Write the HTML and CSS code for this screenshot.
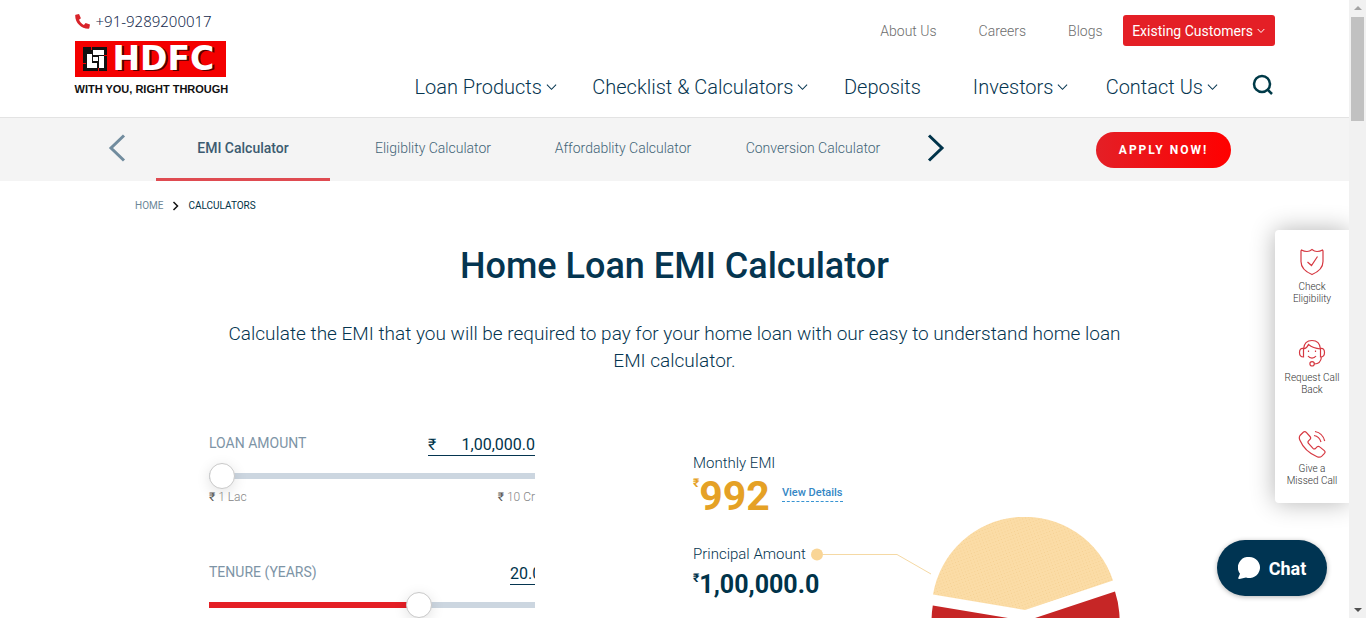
FILE: index.html
```html
<!DOCTYPE html>
<html lang="en">
<head>
<meta charset="utf-8">
<meta name="viewport" content="width=device-width, initial-scale=1">
<title>Home Loan EMI Calculator</title>
<link rel="stylesheet" href="styles.css">
</head>
<body>
<div class="page">
  <header class="header">
    <div class="container header-inner">
      <div class="brand">
        <a class="phone" href="#call">
          <svg class="phone-icon" viewBox="0 0 16 16" aria-hidden="true"><path d="M.7.8 4.3 0l2 4.5-2 1.700c.9 2.300 2.800 4.300 5.200 5.400l1.800-2.100L16 11.300 15.300 15c-.1.5-.4.8-1 .8C6.500 15.800.2 9.500.2 1.700.2 1.200.4.9.7.800Z"/></svg>
          +91-9289200017
        </a>
        <a class="logo" href="#home" aria-label="HDFC">
          <span class="logo-box">
            <svg class="logo-mark" viewBox="0 0 24 24" aria-hidden="true"><path fill="#111" d="M0 0h24v24H0z"/><path fill="#fff" d="M10 3h11v5H10zM4 7h5v14H4zM4 16h10v5H4zM16 9h5v12h-5zM10 10h5v4h-5z"/><path fill="#f40000" d="M8 0h1v3H8zM0 16h3v1H0zM21 8h3v1h-3zM15 21h1v3h-1z"/></svg>
            <span class="logo-name">HDFC</span>
          </span>
          <span class="logo-tag">WITH YOU, RIGHT THROUGH</span>
        </a>
      </div>
      <div class="menus">
        <nav class="top-links" aria-label="Company">
          <a href="#about">About Us</a>
          <a href="#careers">Careers</a>
          <a href="#blogs">Blogs</a>
          <button class="customers" type="button">Existing Customers
            <svg class="chev-small" viewBox="0 0 8 6" aria-hidden="true"><path d="m.7 1 3.300 3.500L7.300 1"/></svg>
          </button>
        </nav>
        <nav class="main-nav" aria-label="Main">
          <a href="#loans">Loan Products <svg class="chev" viewBox="0 0 12 8" aria-hidden="true"><path d="m1 1.500 5 5 5-5"/></svg></a>
          <a href="#checklist">Checklist &amp; Calculators <svg class="chev" viewBox="0 0 12 8" aria-hidden="true"><path d="m1 1.500 5 5 5-5"/></svg></a>
          <a href="#deposits">Deposits</a>
          <a href="#investors">Investors <svg class="chev" viewBox="0 0 12 8" aria-hidden="true"><path d="m1 1.500 5 5 5-5"/></svg></a>
          <a href="#contact">Contact Us <svg class="chev" viewBox="0 0 12 8" aria-hidden="true"><path d="m1 1.500 5 5 5-5"/></svg></a>
          <button class="search" type="button" aria-label="Search"><svg viewBox="0 0 22 22" aria-hidden="true"><circle cx="10" cy="10" r="8"/><path d="m15.500 15.500 4.500 4.500"/></svg></button>
        </nav>
      </div>
    </div>
  </header>

  <div class="subnav">
    <button class="arrow prev" type="button" aria-label="Previous"><svg viewBox="0 0 18 28" aria-hidden="true"><path d="M16 1.500 3 14l13 12.500"/></svg></button>
    <nav class="tabs" aria-label="Calculators">
      <a class="tab active" href="#emi">EMI Calculator</a>
      <a class="tab" href="#eligibility">Eligiblity Calculator</a>
      <a class="tab" href="#affordability">Affordablity Calculator</a>
      <a class="tab" href="#conversion">Conversion Calculator</a>
    </nav>
    <button class="arrow next" type="button" aria-label="Next"><svg viewBox="0 0 18 28" aria-hidden="true"><path d="m2 1.500 13 12.500L2 26.500"/></svg></button>
    <a class="apply" href="#apply">APPLY NOW!</a>
  </div>

  <main>
    <nav class="crumbs" aria-label="Breadcrumb">
      <a href="#home">HOME</a>
      <svg viewBox="0 0 7 10" aria-hidden="true"><path d="m1.500 1 4 4-4 4"/></svg>
      <span>CALCULATORS</span>
    </nav>
    <h1>Home Loan EMI Calculator</h1>
    <p class="intro">Calculate the EMI that you will be required to pay for your home loan with our easy to understand home loan<br>EMI calculator.</p>

    <div class="calculator">
      <form class="inputs">
        <div class="field">
          <div class="field-head">
            <label for="amount">LOAN AMOUNT</label>
            <span class="value-box amount-box"><span>₹</span><input id="amount" type="text" value="1,00,000.0"></span>
          </div>
          <input class="range range-amount" type="range" min="0" max="100" value="0" aria-label="Loan amount slider">
          <div class="limits"><span><b>₹</b> 1 Lac</span><span><b>₹</b> 10 Cr</span></div>
        </div>
        <div class="field">
          <div class="field-head">
            <label for="tenure">TENURE (YEARS)</label>
            <span class="value-box tenure-box"><input id="tenure" type="text" value="20.0"></span>
          </div>
          <input class="range range-tenure" type="range" min="1" max="30" value="20" aria-label="Tenure slider">
        </div>
      </form>

      <section class="results" aria-label="Results">
        <div class="monthly">
          <div class="result-label">Monthly EMI</div>
          <div class="emi-row"><span class="emi"><sup>₹</sup>992</span><a class="details" href="#details">View Details</a></div>
        </div>
        <div class="breakup">
          <div class="principal">
            <div class="result-label">Principal Amount</div>
            <div class="sum"><sup>₹</sup>1,00,000.0</div>
          </div>
          <svg class="pie" viewBox="811 517 310 198" aria-hidden="true">
            <defs><pattern id="dots" width="3" height="3" patternUnits="userSpaceOnUse" patternTransform="rotate(-20)"><path fill="#fbdca6" d="M0 0h3v3H0z"/><path fill="#f5d092" d="M0 0h1v1H0z"/></pattern></defs>
            <circle cx="817" cy="554.500" r="6" fill="#f9d596"/>
            <path d="M823 554.500h74l34 19.500" fill="none" stroke="#f5d9a4"/>
            <path fill="url(#dots)" d="M1025 610 933 594.500A93 93 0 0 1 1113 580.500Z"/>
            <path fill="#c62626" d="M1026 621 932.800 605.500A94 94 0 1 0 1115 591.500Z"/>
          </svg>
        </div>
      </section>
    </div>
  </main>

  <aside class="quick" aria-label="Quick actions">
    <a href="#check"><svg viewBox="0 0 28 28" aria-hidden="true"><path d="M14 1.500c-1.500 1.300-3.200 2-5 2-2 0-4-.6-5.500-1.500L3 3v10.500c0 6 5 10.500 11 13 6-2.500 11-7 11-13V3l-.5-1C23 2.900 21 3.500 19 3.500c-1.800 0-3.500-.7-5-2ZM9.500 14l4 3.500 6-9"/></svg>Check<br>Eligibility</a>
    <a href="#callback"><svg viewBox="0 0 28 28" aria-hidden="true"><path d="M5.500 10C6 4.500 9.500 1.500 14 1.500s8 3 8.500 8.500M5.500 9.500c-2.500-.5-4 1-4 4s1.500 4.500 4 4.500Zm17 0c2.500-.5 4 1 4 4s-1.500 4.500-4 4.500Zm-17 .5c2.500-.5 4-2 5-4.500 3 2.500 7 4 12 4.500M23.500 18c-.5 4-3 7-7 7m-.2-.2a2.200 2.200 0 1 1-4.400 0 2.200 2.200 0 0 1 4.400 0ZM10 17c2 2.700 6 2.700 8 0M10.500 11.500v1.500M17.500 11.500v1.500"/></svg>Request Call<br>Back</a>
    <a href="#missed"><svg viewBox="0 0 28 28" aria-hidden="true"><path d="M2 5.500 5.500 2c1-.7 2-.5 2.800.3L12 6.500c.8.9.8 2 0 2.800l-1.500 1.500c-.8.8-.6 1.800 0 2.700l4.500 4.800c.8.800 1.800.800 2.600 0l1.400-1.400c.8-.7 1.900-.7 2.700 0l4.600 3.700c.9.800 1 1.800.2 2.700l-2.700 2.800c-1.300 1.200-3 1.300-4.700.6C11.500 23.600 5 17.500 1.800 10c-.7-1.700-.6-3.300.2-4.500ZM16 5.500c3.500.6 6 3 7 6.500M17 1.500c5 1 8.500 4.500 9.700 9.500"/></svg>Give a<br>Missed Call</a>
  </aside>

  <button class="chat" type="button"><svg viewBox="0 0 22 22" aria-hidden="true"><path d="M11.500 0A10.500 10.500 0 1 1 8 20.400L1.500 22 0 21.500l2-4.800A10.500 10.500 0 0 1 11.500 0Z"/></svg>Chat</button>
</div>
<div class="scrollbar" aria-hidden="true"><i class="up"></i><i class="grip"></i><i class="down"></i></div>
</body>
</html>
```
FILE: styles.css
```css
* { box-sizing: border-box; }
body {
  margin: 0;
  display: grid;
  grid-template-columns: minmax(0, 1fr) 17px;
  height: 100vh;
  overflow: hidden;
  background: #fff;
  color: #053550;
  font-family: Roboto, "Open Sans", sans-serif;
}
a { color: inherit; text-decoration: none; }
button { font: inherit; border: 0; padding: 0; background: none; cursor: pointer; }
svg { display: block; flex: none; }
.page { position: relative; overflow: hidden; }

/* Header */
.header { border-bottom: 1px solid #e3e3e3; }
.container { max-width: 1200px; margin: 0 auto; }
.header-inner { display: flex; justify-content: space-between; height: 117px; }
.brand { padding-top: 11px; }
.phone { display: flex; align-items: center; gap: 6px; height: 20px; font-family: "Noto Sans", sans-serif; font-size: 15px; font-weight: 300; color: #12284c; }
.phone-icon { width: 15px; height: 15px; fill: #d8232a; }
.logo { display: block; margin-top: 10px; width: 151px; }
.logo-box { display: flex; align-items: center; gap: 6px; height: 36px; padding-left: 8px; background: #f40000; color: #fff; }
.logo-mark { width: 24px; height: 24px; }
.logo-name { font-family: "DejaVu Sans", sans-serif; font-size: 33px; font-weight: 700; line-height: 36px; text-shadow: 2px 1px 0 #500; }
.logo-tag { display: block; margin-top: 6px; font-family: "Liberation Sans", sans-serif; font-size: 11px; font-weight: 700; line-height: 12px; color: #111; white-space: nowrap; }
.menus { width: 860px; }
.top-links { display: flex; justify-content: flex-end; align-items: center; padding-top: 15px; height: 46px; font-size: 14px; font-weight: 300; color: #6d6d6d; }
.top-links a { margin-right: 42px; }
.top-links a:nth-of-type(3) { margin-right: 20px; }
.customers { display: flex; align-items: center; justify-content: center; gap: 4px; width: 152px; height: 31px; border-radius: 3px; background: #e41f26; color: #fff; font-weight: 400; font-size: 14px; }
.chev-small { width: 8px; height: 6px; fill: none; stroke: #fff; }
.main-nav { display: grid; grid-template-columns: 178fr 252fr 129fr 133fr 147fr 21fr; align-items: center; padding-top: 25px; font-size: 20px; font-weight: 300; line-height: 32px; }
.main-nav a { display: flex; align-items: center; gap: 4px; white-space: nowrap; }
.chev { width: 11px; height: 8px; fill: none; stroke: #053550; stroke-width: 1.1; }
.search svg { width: 22px; height: 22px; margin-bottom: 4px; fill: none; stroke: #003a48; stroke-width: 2.5; }

/* Calculator tabs */
.subnav { display: flex; align-items: center; height: 63px; padding: 0 118px 0 108px; background: #f4f4f4; }
.arrow svg { width: 18px; height: 28px; margin-bottom: 4px; fill: none; stroke-width: 3; }
.prev { margin-right: 30px; }
.prev svg { stroke: #718c9e; }
.next svg { stroke: #00334a; }
.tabs { display: grid; grid-template-columns: 174px 206px 174px 206px; align-self: stretch; margin-right: 11px; }
.tab { display: flex; align-items: center; justify-content: center; border-bottom: 3px solid transparent; font-size: 14px; font-weight: 300; color: #426477; }
.tab.active { font-weight: 500; color: #3c5b70; border-color: #df4b51; }
.apply { margin-left: auto; width: 135px; height: 36px; border-radius: 18px; background: linear-gradient(90deg, #e41f26, #f00); color: #fff; font-size: 12px; font-weight: 700; letter-spacing: 2px; line-height: 36px; text-align: center; }

/* Intro */
.crumbs { display: flex; align-items: center; gap: 9px; padding: 18px 0 0 135px; font-size: 10px; line-height: 14px; color: #003245; }
.crumbs a { color: #6d8798; }
.crumbs svg { width: 7px; height: 10px; fill: none; stroke: #111; stroke-width: 1.5; }
h1 { margin: 27px 0 0; font-size: 36px; font-weight: 500; line-height: 52px; text-align: center; }
.intro { margin: 28px 0 0; font-size: 19px; font-weight: 300; line-height: 27px; text-align: center; }

/* Calculator */
.calculator { display: grid; grid-template-columns: 326px 1fr; gap: 158px; padding: 59px 209px 0; }
.field { height: 129px; }
.field-head { display: flex; justify-content: space-between; height: 24px; }
.field-head label { font-size: 14px; line-height: 20px; color: #7d94a6; }
.value-box { display: flex; align-items: center; height: 23px; padding-top: 1px; border-bottom: 1px solid #053550; font-size: 16px; color: #00334a; }
.value-box input { width: 100%; padding: 0; border: 0; background: none; font: inherit; color: inherit; }
.amount-box { width: 107px; }
.amount-box input { text-align: right; }
.tenure-box { width: 25px; }
.range { -webkit-appearance: none; appearance: none; display: block; width: 100%; height: 26px; margin: 6px 0 0; background: linear-gradient(#ccd6e0, #ccd6e0) center / 100% 6px no-repeat; }
.range-tenure { background: linear-gradient(90deg, #e41f26 65%, #ccd6e0 65%) center / 100% 6px no-repeat; }
.range::-webkit-slider-thumb { -webkit-appearance: none; width: 26px; height: 26px; border: 1px solid #c9c9c9; border-radius: 50%; background: #fff; box-shadow: 0 3px 14px rgba(0, 0, 0, .12); }
.limits { display: flex; justify-content: space-between; font-size: 12px; font-weight: 300; line-height: 16px; color: #858585; }
.limits b { font-weight: 400; color: #555; }
.result-label { font-size: 15px; font-weight: 300; line-height: 22px; white-space: nowrap; }
.monthly { height: 84px; padding-top: 19px; }
.emi-row { display: flex; align-items: center; gap: 12px; }
sup { padding-top: 3px; font-size: 12px; line-height: 12px; align-self: flex-start; }
.emi { display: flex; color: #e5a125; font-size: 41px; font-weight: 700; line-height: 44px; }
.details { margin-top: -6px; border-bottom: 1px dashed #3894d2; color: #3587c5; font-size: 11px; font-weight: 500; line-height: 16px; }
.breakup { display: flex; }
.principal { width: 118px; flex: none; padding-top: 26px; }
.sum { display: flex; padding-top: 4px; font-size: 25px; font-weight: 700; line-height: 32px; color: #00334a; white-space: nowrap; }
.pie { width: 310px; height: 198px; }

/* Floating actions */
.quick { position: absolute; top: 230px; right: 0; width: 74px; height: 273px; padding-top: 18px; border-radius: 4px 0 0 4px; background: #fff; box-shadow: 0 0 24px rgba(0, 0, 0, .3); }
.quick a { display: flex; flex-direction: column; align-items: center; height: 91px; font-size: 10px; font-weight: 300; line-height: 12px; color: #333; text-align: center; white-space: nowrap; }
.quick svg { width: 28px; height: 28px; margin-bottom: 5px; fill: none; stroke: #d63841; stroke-width: 1.2; }
.chat { position: absolute; top: 540px; right: 22px; display: flex; align-items: center; justify-content: center; gap: 9px; width: 110px; height: 56px; border-radius: 28px; background: #003452; color: #fff; font-size: 18px; font-weight: 700; box-shadow: 0 1px 5px rgba(0, 0, 0, .3); }
.chat svg { width: 22px; height: 22px; fill: #fff; }

/* Scrollbar */
.scrollbar { display: flex; flex-direction: column; align-items: center; padding: 6px 0; background: #f1f1f1; }
.scrollbar .up, .scrollbar .down { border: 4px solid transparent; }
.scrollbar .up { border-top: 0; border-bottom-color: #a3a3a3; }
.scrollbar .down { margin-top: auto; border-bottom: 0; border-top-color: #505050; }
.grip { width: 13px; height: 104px; margin-top: 7px; background: #c1c1c1; }
```
